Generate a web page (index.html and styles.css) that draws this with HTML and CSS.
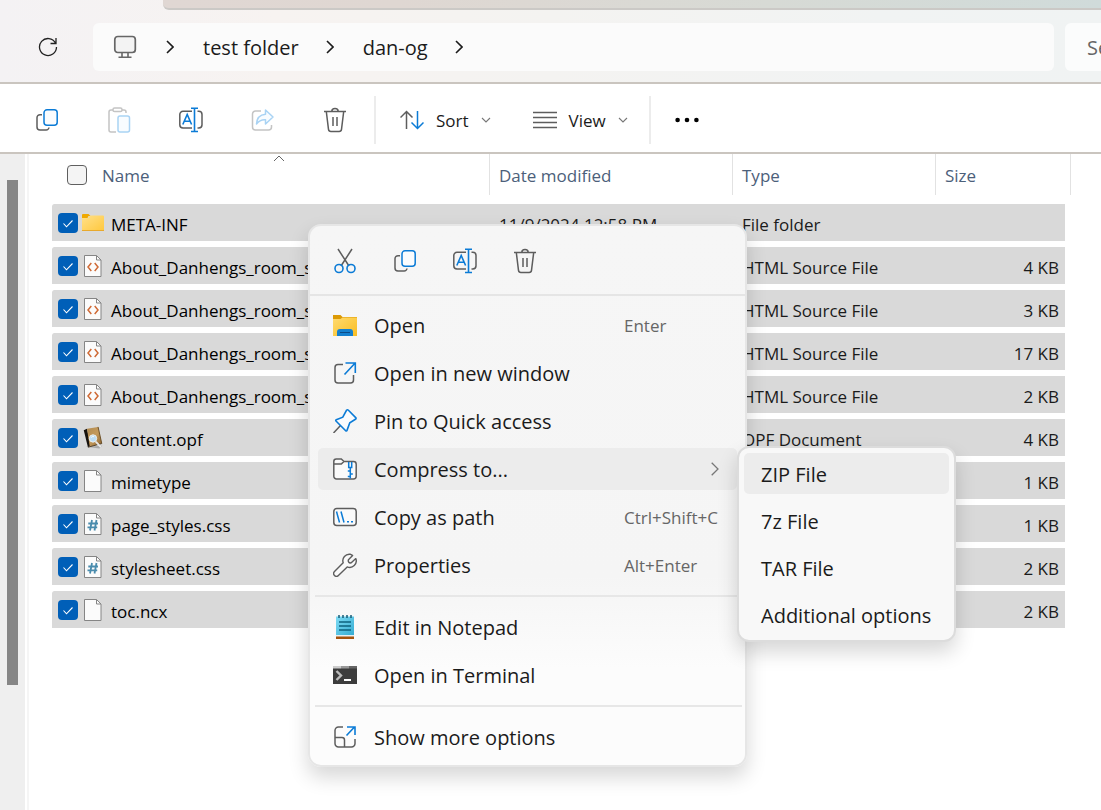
FILE: index.html
```html
<!DOCTYPE html>
<html lang="en">
<head>
<meta charset="utf-8">
<meta name="viewport" content="width=device-width, initial-scale=1">
<title>dan-og</title>
<link rel="stylesheet" href="styles.css">
</head>
<body>
<svg class="sprite" aria-hidden="true">
  <defs>
    <linearGradient id="g-folder" x1="0" y1="0" x2="1" y2="1"><stop offset="0" stop-color="#ffe08a"/><stop offset="1" stop-color="#ffc83d"/></linearGradient>
    <linearGradient id="g-folder2" x1="0" y1="0" x2="1" y2="1"><stop offset="0" stop-color="#ffdb70"/><stop offset="1" stop-color="#f9bd22"/></linearGradient>
    <linearGradient id="g-pad" x1="0" y1="0" x2="1" y2="1"><stop offset="0" stop-color="#7fdcf5"/><stop offset="1" stop-color="#35acd2"/></linearGradient>
    <linearGradient id="g-book" x1="0" y1="0" x2="1" y2="1"><stop offset="0" stop-color="#b08a50"/><stop offset="0.5" stop-color="#c49a5c"/><stop offset="1" stop-color="#8a622e"/></linearGradient>
  </defs>
  <symbol id="chev-right" viewBox="0 0 8 14"><path d="M1 1l6 6-6 6" fill="none" stroke="currentColor" stroke-width="1.6"/></symbol>
  <symbol id="chev-down" viewBox="0 0 10 6"><path d="M1 1l4 4 4-4" fill="none" stroke="#777" stroke-width="1.1"/></symbol>
  <symbol id="copy" viewBox="0 0 24 24"><path d="M7 6.700H5A3 3 0 0 0 2 9.700V19a3 3 0 0 0 3 3h6a3 3 0 0 0 3-2.500" fill="none" stroke="#5d5d5d" stroke-width="1.500"/><rect x="9" y="1.800" width="13.200" height="15.500" rx="3" fill="#fafcfe" stroke="#0b7bd6" stroke-width="1.500"/></symbol>
  <symbol id="paste" viewBox="0 0 24 26"><path d="M6 3H4a2 2 0 0 0-2 2v18a2 2 0 0 0 2 2h5M15 3h2a2 2 0 0 1 2 2v1" fill="none" stroke="#c4c4c4" stroke-width="1.500"/><rect x="6" y="1" width="9" height="3.600" rx="1.600" fill="none" stroke="#c4c4c4" stroke-width="1.500"/><rect x="11" y="9" width="11.500" height="16" rx="2" fill="#f8fcff" stroke="#a9d3f4" stroke-width="1.500"/></symbol>
  <symbol id="rename" viewBox="0 0 24 26"><path d="M13 4.300H4A3.200 3.200 0 0 0 .8 7.500v10.200A3.200 3.200 0 0 0 4 20.900h9M18.500 4.300h1.300a3.200 3.200 0 0 1 3.200 3.200v10.200a3.200 3.200 0 0 1-3.200 3.200h-1.300" fill="none" stroke="#5d5d5d" stroke-width="1.500"/><path d="M3.800 17.500l4.400-10 4.400 10M5.200 14.200h6M15.500 1.500v23M12 1.300h7M12 24.500h7" fill="none" stroke="#0b7bd6" stroke-width="1.600"/></symbol>
  <symbol id="share" viewBox="0 0 24 24"><path d="M10 3H4.500A3 3 0 0 0 1.500 6v13a3 3 0 0 0 3 3h13a3 3 0 0 0 3-3v-2" fill="none" stroke="#c4c4c4" stroke-width="1.500"/><path d="M14.500 2l7.500 7-7.500 7v-4.200c-4-.3-6.500.9-9 4.200.3-6 3.300-9.300 9-9.800z" fill="#f8fcff" stroke="#a9d3f4" stroke-width="1.500" stroke-linejoin="round"/></symbol>
  <symbol id="trash" viewBox="0 0 24 26"><path d="M1 4.500h22M3.300 4.500l2.200 17.800a2.400 2.400 0 0 0 2.400 2.100h8.200a2.400 2.400 0 0 0 2.400-2.100l2.200-17.800M8.800 4.300a3.200 2.800 0 0 1 6.400 0M10 10v9M14 10v9" fill="none" stroke="#5d5d5d" stroke-width="1.500"/></symbol>
  <symbol id="cut" viewBox="0 0 24 26"><path d="M5 1l11 17M19 1L8 18" fill="none" stroke="#5d5d5d" stroke-width="1.500"/><circle cx="6" cy="20.500" r="4" fill="none" stroke="#0b7bd6" stroke-width="1.600"/><circle cx="18" cy="20.500" r="4" fill="none" stroke="#0b7bd6" stroke-width="1.600"/></symbol>
  <symbol id="page" viewBox="0 0 24 24"><path d="M3.500 1.500h12l4.500 4.500v16.500h-16.500z" fill="#fbfbfb" stroke="#858585"/><path d="M15.500 1.500v4.500h4.500" fill="none" stroke="#858585"/></symbol>
  <symbol id="html" viewBox="0 0 24 24"><use href="#page"/><path d="M10.300 9L7 13l3.300 4M13.700 9l3.300 4-3.300 4" fill="none" stroke="#cf6a35" stroke-width="1.500"/></symbol>
  <symbol id="css" viewBox="0 0 24 24"><use href="#page"/><path d="M11 8l-2 10.500M15.500 8l-2 10.500M7.300 11.500h9.700M6.500 15.300h9.700" fill="none" stroke="#4a8cad" stroke-width="1.800"/></symbol>
  <symbol id="folder" viewBox="0 0 24 24"><path d="M1 4a1 1 0 0 1 1-1h5.500l2 2h-2L6 8H1z" fill="#f0a900"/><path d="M1 7h6l2.500-2.500H22a1 1 0 0 1 1 1V20H1z" fill="url(#g-folder)"/><path d="M1 19.500h22" stroke="#e8a92c"/></symbol>
  <symbol id="book" viewBox="0 0 24 26"><path d="M4 22.500l15 2 3-3z" fill="#aaa"/><path d="M2 4.500L5.500 3l4 18.500L6.500 23z" fill="#16110d"/><path d="M5.500 3L17.500 1l4 18-13 3.500z" fill="url(#g-book)"/><path d="M6.500 23l15-4" stroke="#4b3b26"/><path d="M17.500 1l4 18" stroke="#65491f"/><path d="M15 17l5.500 6" stroke="#e8e8e8" stroke-width="2"/><circle cx="12" cy="13.500" r="4" fill="#bcdcf3" stroke="#f0f0ed"/><path d="M10 12.500a2.500 2 0 0 1 3-1" stroke="#fff" fill="none"/></symbol>
  <symbol id="explorer" viewBox="0 0 24 24"><path d="M0 2h7.500l2 2H24v4H0z" fill="#dc9a05"/><path d="M0 6h7.500L9.500 4.500H24V23H0z" fill="url(#g-folder2)"/><path d="M4 23v-4a3 3 0 0 1 3-3h10a3 3 0 0 1 3 3v4z" fill="#1480cf"/><path d="M7 19.500h10" stroke="#0b4b88"/></symbol>
  <symbol id="open-new" viewBox="0 0 24 24"><path d="M10 3.500H5A3 3 0 0 0 2 6.500v12.500a3 3 0 0 0 3 3h12.500a3 3 0 0 0 3-3v-5" fill="none" stroke="#5d5d5d" stroke-width="1.500"/><path d="M11.500 13.500L21.700 2.500M12.500 2h9.800v10" fill="none" stroke="#0b7bd6" stroke-width="1.600"/></symbol>
  <symbol id="pin" viewBox="0 0 24 24"><path d="M.5 24l7-7.500" stroke="#5d5d5d" stroke-width="1.500"/><path d="M13.500 1.300c.7-.7 1.300-.6 1.900 0l7.300 7.300c.6.6.4 1.200-.3 1.700l-5.600 3.500-2.800 7.600c-.3.700-.9.700-1.300.300L3 12c-.4-.5-.300-1 .3-1.300l6.500-2.500z" fill="#fafcfe" stroke="#0b7bd6" stroke-width="1.600"/></symbol>
  <symbol id="zip" viewBox="0 0 24 24"><path d="M.8 4.500A2.500 2.500 0 0 1 3.300 2h5l2.700 2.500h9.500a2.700 2.700 0 0 1 2.700 2.700v12a2.700 2.700 0 0 1-2.700 2.700H3.500a2.700 2.700 0 0 1-2.700-2.700zM.8 7h7.500l2.700-2.500" fill="#fafafa" stroke="#5d5d5d" stroke-width="1.500"/><path d="M15.700 5v5.500h3V5M17.300 10.500v11M14.800 14h2.500M17.300 17h2.500M14.800 19.500h2.500" fill="none" stroke="#0b7bd6" stroke-width="1.500"/></symbol>
  <symbol id="path" viewBox="0 0 24 24"><rect x=".8" y="3.500" width="22.400" height="17" rx="3" fill="#fafafa" stroke="#5d5d5d" stroke-width="1.500"/><path d="M3.500 6.500l3 11M8 6.500l3 11M14 16.800h2M18 16.800h2" stroke="#0b7bd6" stroke-width="1.500"/></symbol>
  <symbol id="wrench" viewBox="0 0 24 24"><path d="M17.500 1.300a6.500 6.500 0 0 0-7.300 8.500L1.500 18.500a2.700 2.700 0 0 0 3.900 3.900l8.800-8.500a6.500 6.500 0 0 0 8.600-8.300l-4 3.700a2 2 0 0 1-3-.1 2 2 0 0 1 .1-2.900l3.700-3.800a5 5 0 0 0-2.100-1.200z" fill="#fafafa" stroke="#5d5d5d" stroke-width="1.400" stroke-linejoin="round"/></symbol>
  <symbol id="notepad" viewBox="0 0 24 24"><path d="M3 20h18v4H3z" fill="#a5520d"/><path d="M3 19h18v2.500H3z" fill="#e9f0f3"/><path d="M3 1.500h18v18.500H3z" fill="url(#g-pad)"/><path d="M6 0v3M10 0v3M14 0v3M18 0v3" stroke="#155b76" stroke-width="1.500"/><path d="M6 7h12M6 11h12M6 15h12" stroke="#0c627f" stroke-width="1.700"/></symbol>
  <symbol id="terminal" viewBox="0 0 24 24"><path d="M0 3h24v18H0z" fill="#3c3c3c"/><path d="M0 3h8v2.500H0z" fill="#ccc"/><path d="M8 3h8v2.500H8z" fill="#999"/><path d="M16 3h8v2.500h-8z" fill="#666"/><path d="M3.500 8l4.500 4.500L3.500 17" fill="none" stroke="#bcbcbc" stroke-width="2.400"/><path d="M11 17h7" stroke="#fff" stroke-width="2"/></symbol>
  <symbol id="more-opts" viewBox="0 0 24 24"><path d="M10 2H5.500a3.500 3.500 0 0 0-3.500 3.500v13a3.500 3.500 0 0 0 3.500 3.500h13a3.500 3.500 0 0 0 3.500-3.500V14M2 12.500h7a2.500 2.500 0 0 1 2.500 2.500v7" fill="none" stroke="#5d5d5d" stroke-width="1.500"/><path d="M13.500 10.500l8-8.500M14 2h8v8" fill="none" stroke="#0b7bd6" stroke-width="1.600"/></symbol>
</svg>

<div class="window">
  <header class="titlebar">
    <div class="tabstrip"></div>
    <div class="nav">
      <button class="refresh" type="button" aria-label="Refresh"><svg width="20" height="20" viewBox="0 0 20 20"><path d="M17.500 6A8.500 8.500 0 1 0 18.500 10M18 1v5.500h-5.500" fill="none" stroke="#222" stroke-width="1.300"/></svg></button>
      <nav class="address" aria-label="Address">
        <svg class="monitor" width="24" height="24" viewBox="0 0 24 24"><rect x="1.800" y="1.500" width="20.500" height="16" rx="3" fill="#f3f3f3" stroke="#666" stroke-width="1.700"/><path d="M9 18v4M15 18v4M5.500 22.300h13" stroke="#666" stroke-width="1.600"/></svg>
        <svg class="sep" width="8" height="14"><use href="#chev-right"/></svg>
        <a href="#">test folder</a>
        <svg class="sep" width="8" height="14"><use href="#chev-right"/></svg>
        <a href="#">dan-og</a>
        <svg class="sep" width="8" height="14"><use href="#chev-right"/></svg>
      </nav>
      <input class="search" type="text" placeholder="Search dan-og" aria-label="Search dan-og">
    </div>
  </header>

  <div class="toolbar" role="toolbar" aria-label="Commands">
    <button class="tool" type="button" aria-label="Copy"><svg width="24" height="24"><use href="#copy"/></svg></button>
    <button class="tool" type="button" aria-label="Paste"><svg width="24" height="26"><use href="#paste"/></svg></button>
    <button class="tool" type="button" aria-label="Rename"><svg width="24" height="26"><use href="#rename"/></svg></button>
    <button class="tool" type="button" aria-label="Share"><svg width="24" height="24"><use href="#share"/></svg></button>
    <button class="tool" type="button" aria-label="Delete"><svg width="24" height="26"><use href="#trash"/></svg></button>
    <span class="rule"></span>
    <button class="drop" type="button"><svg width="24" height="20" viewBox="0 0 24 20"><path d="M6.500 19V2M.5 7.500l6-6 6 6" fill="none" stroke="#5d5d5d" stroke-width="1.500"/><path d="M17.500 1v17M11.500 12.500l6 6 6-6" fill="none" stroke="#0b7bd6" stroke-width="1.500"/></svg><span>Sort</span><svg width="10" height="6"><use href="#chev-down"/></svg></button>
    <button class="drop" type="button"><svg width="24" height="18" viewBox="0 0 24 18"><path d="M0 1.500h24M0 6.500h24M0 11.500h24M0 16.500h24" stroke="#5d5d5d" stroke-width="1.400"/></svg><span>View</span><svg width="10" height="6"><use href="#chev-down"/></svg></button>
    <span class="rule"></span>
    <button class="dots" type="button" aria-label="More options"><svg width="24" height="6" viewBox="0 0 24 6"><circle cx="2.600" cy="3" r="2.300"/><circle cx="12" cy="3" r="2.300"/><circle cx="21.400" cy="3" r="2.300"/></svg></button>
  </div>

  <main class="content">
    <div class="scroll"><div class="thumb"></div></div>
    <div class="files">
      <table class="list">
        <colgroup><col><col class="c-date"><col class="c-type"><col class="c-size"></colgroup>
        <thead>
          <tr>
            <th><label class="head-name"><input type="checkbox" class="check" aria-label="Select all"><span>Name</span></label><svg class="sorted" width="12" height="7" viewBox="0 0 12 7"><path d="M1 6l5-5 5 5" fill="none" stroke="#666"/></svg></th>
            <th>Date modified</th><th>Type</th><th>Size</th>
          </tr>
        </thead>
        <tbody>
          <tr><td><label class="file"><input type="checkbox" class="check" checked><svg width="24" height="24"><use href="#folder"/></svg><span>META-INF</span></label></td><td>11/9/2024 12:58 PM</td><td>File folder</td><td></td></tr>
          <tr><td><label class="file"><input type="checkbox" class="check" checked><svg width="24" height="24"><use href="#html"/></svg><span>About_Danhengs_room_s</span></label></td><td></td><td>HTML Source File</td><td>4 KB</td></tr>
          <tr><td><label class="file"><input type="checkbox" class="check" checked><svg width="24" height="24"><use href="#html"/></svg><span>About_Danhengs_room_s</span></label></td><td></td><td>HTML Source File</td><td>3 KB</td></tr>
          <tr><td><label class="file"><input type="checkbox" class="check" checked><svg width="24" height="24"><use href="#html"/></svg><span>About_Danhengs_room_s</span></label></td><td></td><td>HTML Source File</td><td>17 KB</td></tr>
          <tr><td><label class="file"><input type="checkbox" class="check" checked><svg width="24" height="24"><use href="#html"/></svg><span>About_Danhengs_room_s</span></label></td><td></td><td>HTML Source File</td><td>2 KB</td></tr>
          <tr><td><label class="file"><input type="checkbox" class="check" checked><svg width="24" height="24"><use href="#book"/></svg><span>content.opf</span></label></td><td></td><td>OPF Document</td><td>4 KB</td></tr>
          <tr><td><label class="file"><input type="checkbox" class="check" checked><svg width="24" height="24"><use href="#page"/></svg><span>mimetype</span></label></td><td></td><td></td><td>1 KB</td></tr>
          <tr><td><label class="file"><input type="checkbox" class="check" checked><svg width="24" height="24"><use href="#css"/></svg><span>page_styles.css</span></label></td><td></td><td></td><td>1 KB</td></tr>
          <tr><td><label class="file"><input type="checkbox" class="check" checked><svg width="24" height="24"><use href="#css"/></svg><span>stylesheet.css</span></label></td><td></td><td></td><td>2 KB</td></tr>
          <tr><td><label class="file"><input type="checkbox" class="check" checked><svg width="24" height="24"><use href="#page"/></svg><span>toc.ncx</span></label></td><td></td><td></td><td>2 KB</td></tr>
        </tbody>
      </table>
    </div>
  </main>

  <div class="menu" role="menu">
    <div class="quick">
      <button type="button" aria-label="Cut"><svg width="24" height="26"><use href="#cut"/></svg></button>
      <button type="button" aria-label="Copy"><svg width="24" height="24"><use href="#copy"/></svg></button>
      <button type="button" aria-label="Rename"><svg width="24" height="26"><use href="#rename"/></svg></button>
      <button type="button" aria-label="Delete"><svg width="24" height="26"><use href="#trash"/></svg></button>
    </div>
    <div class="items">
      <button class="item" type="button"><svg width="24" height="24"><use href="#explorer"/></svg><span class="text">Open</span><span class="keys">Enter</span></button>
      <button class="item" type="button"><svg width="24" height="24"><use href="#open-new"/></svg><span class="text">Open in new window</span></button>
      <button class="item" type="button"><svg width="24" height="24"><use href="#pin"/></svg><span class="text">Pin to Quick access</span></button>
      <div class="parent">
        <button class="item active" type="button"><svg width="24" height="24"><use href="#zip"/></svg><span class="text">Compress to...</span><svg class="more" width="8" height="14" viewBox="0 0 8 14"><path d="M.7 .7L7 7 .7 13.300" fill="none" stroke="#777" stroke-width="1.300"/></svg></button>
        <div class="submenu" role="menu">
          <button class="active" type="button">ZIP File</button>
          <button type="button">7z File</button>
          <button type="button">TAR File</button>
          <button type="button">Additional options</button>
        </div>
      </div>
      <button class="item" type="button"><svg width="24" height="24"><use href="#path"/></svg><span class="text">Copy as path</span><span class="keys">Ctrl+Shift+C</span></button>
      <button class="item" type="button"><svg width="24" height="24"><use href="#wrench"/></svg><span class="text">Properties</span><span class="keys">Alt+Enter</span></button>
    </div>
    <hr>
    <div class="items">
      <button class="item" type="button"><svg width="24" height="24"><use href="#notepad"/></svg><span class="text">Edit in Notepad</span></button>
      <button class="item" type="button"><svg width="24" height="24"><use href="#terminal"/></svg><span class="text">Open in Terminal</span></button>
    </div>
    <hr>
    <div class="items">
      <button class="item" type="button"><svg width="24" height="24"><use href="#more-opts"/></svg><span class="text">Show more options</span></button>
    </div>
  </div>
</div>
</body>
</html>
```

FILE: styles.css
```css
* { box-sizing: border-box; }

body {
  margin: 0;
  overflow: hidden;
  background: #fff;
  color: #1b1b1b;
  font: 17px/24px "Open Sans", "Noto Sans", sans-serif;
}

button {
  padding: 0;
  border: 0;
  background: none;
  color: inherit;
  font: inherit;
  text-align: left;
}

svg { display: block; flex: none; }
.sprite { position: absolute; width: 0; height: 0; }

.window {
  position: relative;
  display: flex;
  flex-direction: column;
  min-height: 100vh;
}

/* Title and address */
.titlebar {
  background: linear-gradient(90deg, #f4f2f4 0, #f7f3f1 25%, #f4f3f1 50%, #f1f3f3 80%, #f0f3f3 100%);
  border-bottom: 2px solid #cac5bf;
}

.tabstrip {
  height: 10px;
  margin-left: 163px;
  border-bottom: 2px solid #cbc9c6;
  border-bottom-left-radius: 6px;
  background: linear-gradient(90deg, #e0d7d3 0, #dfd7d2 25%, #d7dad5 65%, #d0dbda 100%);
}

.nav {
  display: flex;
  align-items: center;
  height: 72px;
  padding: 2px 0 0 36px;
}

.refresh { width: 57px; padding-left: 2px; }

.address {
  display: flex;
  flex: 1;
  align-items: center;
  height: 48px;
  padding-left: 20px;
  border-radius: 6px;
  background: #fbfbfb;
  font-size: 20px;
}

.address a { padding-top: 2px; color: inherit; text-decoration: none; }
.sep { margin: 0 29px 0 27px; }
.monitor { margin-right: 2px; }

.search {
  width: 36px;
  height: 48px;
  margin-left: 11px;
  padding: 0 0 0 22px;
  border: 0;
  border-radius: 6px 0 0 6px;
  background: #fbfcfc;
  font: 20px/24px "Open Sans", "Noto Sans", sans-serif;
}

.search::placeholder { color: #666; }

/* Commands */
.toolbar {
  display: flex;
  align-items: center;
  height: 70px;
  padding: 4px 0 0 11px;
  border-bottom: 2px solid #cac5bf;
}

.toolbar .tool {
  display: flex;
  align-items: center;
  justify-content: center;
  width: 72px;
  height: 48px;
}

.rule { width: 2px; height: 48px; margin-left: 3px; background: #ececec; }

.drop {
  display: flex;
  align-items: center;
  gap: 12px;
  height: 48px;
  padding: 0 18px 0 24px;
}

.drop span { padding-top: 1px; }

.dots { padding: 0 24px; }

/* File list */
.content { display: flex; flex: 1; }

.scroll {
  flex: none;
  width: 25px;
  margin-right: 2px;
  padding: 26px 7px 0;
  background: #efefef;
}

.thumb { height: 505px; background: #868686; }

.files {
  flex: 1;
  padding: 0 30px 0 23px;
  border-left: 2px solid #f5f5f5;
}

.list {
  width: 100%;
  border-spacing: 0;
  table-layout: fixed;
}

.c-date { width: 243px; }
.c-type { width: 203px; }
.c-size { width: 135px; }

th {
  position: relative;
  height: 41px;
  padding: 2px 0 0 9px;
  border-right: 1px solid #e2e2e2;
  color: #4c607a;
  font-weight: 400;
  text-align: left;
}

th:first-child { padding-top: 0; }
.head-name { display: flex; align-items: center; gap: 15px; padding-left: 6px; }
.head-name span { padding-top: 2px; }
.sorted { position: absolute; top: 1px; left: 221px; }

/* Gap between the header and the first row */
tbody::before { content: ""; display: table-row; height: 9px; }

td {
  height: 43px;
  padding: 4px 0 0 9px;
  overflow: hidden;
  border-bottom: 6px solid transparent;
  background: #d9d9d9;
  background-clip: padding-box;
  white-space: nowrap;
}

td:first-child { padding: 0 0 0 6px; border-radius: 2px 0 0 2px; color: #000; }
td:last-child { padding-right: 6px; border-right: 6px solid transparent; text-align: right; }

.file { display: flex; align-items: center; }
.file svg { margin: 0 6px 0 3px; }
.file span { padding-top: 4px; }

.check {
  flex: none;
  appearance: none;
  width: 20px;
  height: 20px;
  margin: 0;
  border: 1px solid #5f5f5f;
  border-radius: 4px;
  background: #f4f4f4;
}

.check:checked {
  border: 0;
  background: #005fb8 url("data:image/svg+xml,%3Csvg xmlns='http://www.w3.org/2000/svg' viewBox='0 0 20 20'%3E%3Cpath d='M5.500 10.500l3 3.300 6-6.300' fill='none' stroke='white' stroke-width='1.100'/%3E%3C/svg%3E");
}

/* Context menu */
.menu {
  position: absolute;
  top: 224px;
  left: 308px;
  width: 439px;
  padding-bottom: 4px;
  border: 2px solid #e6e6e6;
  border-radius: 13px;
  background: linear-gradient(#f6f6f6 0, #f5f5f5 65%, #fcfcfc 82%, #fcfcfc 100%);
  box-shadow: 0 10px 20px rgba(0, 0, 0, 0.16);
  font-size: 20px;
}

.quick {
  display: flex;
  gap: 36px;
  height: 70px;
  padding: 2px 23px 0;
  border-bottom: 2px solid #e5e5e5;
}

.items { display: grid; gap: 6px; padding: 0 8px; }
.quick + .items { padding-top: 8px; }

.item {
  display: flex;
  align-items: center;
  width: 100%;
  height: 42px;
  padding-left: 15px;
  border-radius: 5px;
}

.active { background: #ececec; }
.text { flex: 1; margin-left: 17px; padding-top: 2px; }
.keys { width: 113px; padding-top: 1px; color: #666; font-size: 17px; }
.more { margin-right: 18px; }

hr {
  height: 2px;
  margin: 9px 3px 9px 5px;
  border: 0;
  background: #e7e7e7;
}

.menu > .items:last-child { padding-bottom: 3px; }

.parent { position: relative; }

.submenu {
  position: absolute;
  top: -2px;
  left: 100%;
  z-index: 1;
  display: grid;
  gap: 6px;
  width: 219px;
  padding: 5px;
  border: 2px solid #dcdcdc;
  border-radius: 12px;
  background: #f8f8f8;
  box-shadow: 0 10px 20px rgba(0, 0, 0, 0.16);
}

.submenu button {
  height: 41px;
  padding: 2px 0 0 17px;
  border-radius: 5px;
  white-space: nowrap;
}
```
